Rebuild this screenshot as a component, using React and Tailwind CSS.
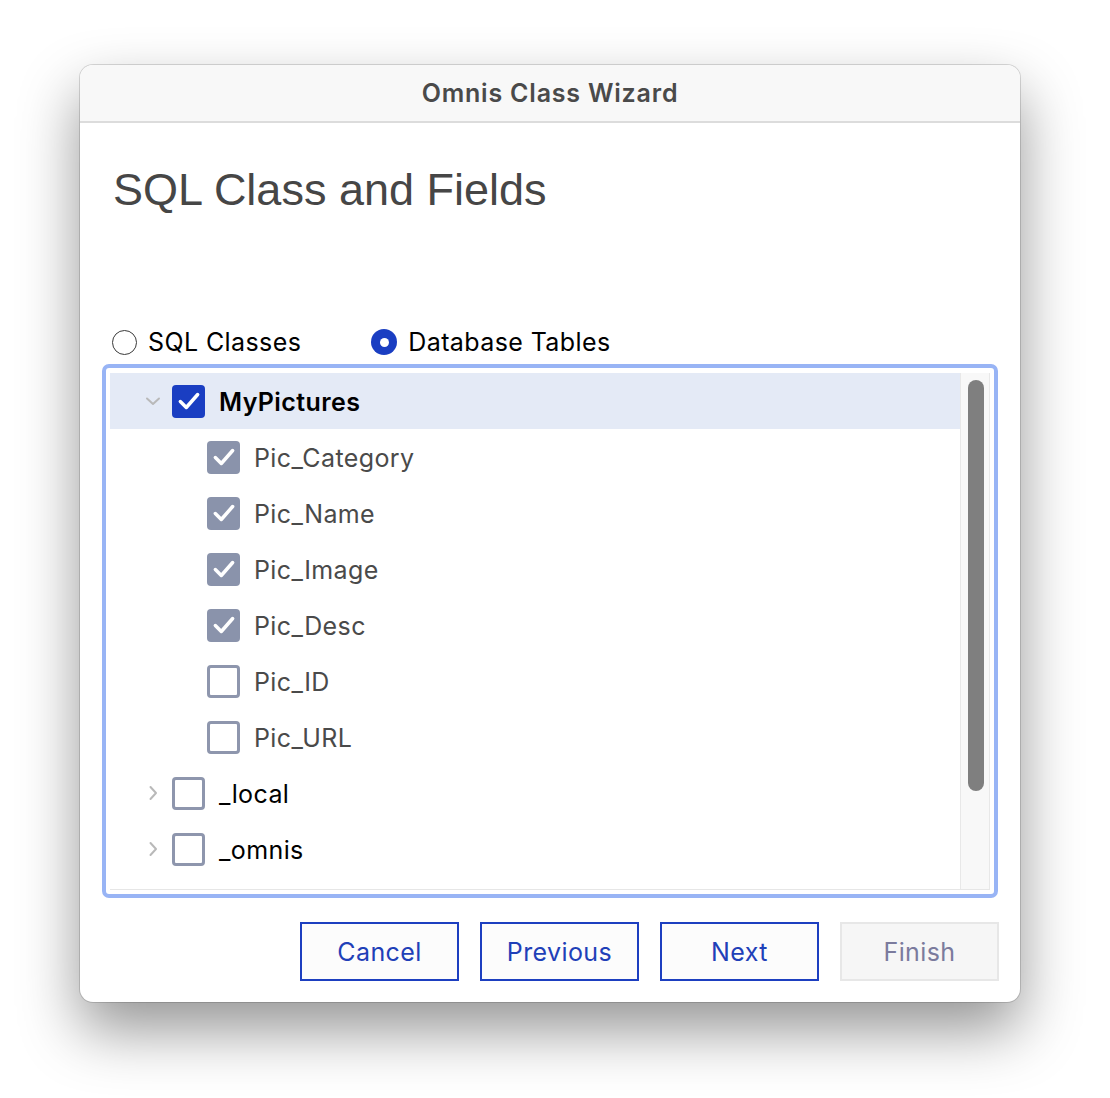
import React from "react";

const ui = { fontFamily: "Inter, 'Noto Sans', sans-serif" };
const helv = { fontFamily: "'Liberation Sans', Arial, sans-serif" };

const rows = [
  { label: "MyPictures", level: 0, open: true, checked: true, active: true },
  { label: "Pic_Category", level: 1, checked: true },
  { label: "Pic_Name", level: 1, checked: true },
  { label: "Pic_Image", level: 1, checked: true },
  { label: "Pic_Desc", level: 1, checked: true },
  { label: "Pic_ID", level: 1, checked: false },
  { label: "Pic_URL", level: 1, checked: false },
  { label: "_local", level: 0, open: false, checked: false },
  { label: "_omnis", level: 0, open: false, checked: false },
  { label: "", level: 0, open: false, checked: false },
];

const Check = ({ checked, strong }) => {
  if (checked) {
    return (
      <span
        className={`flex h-[33px] w-[33px] shrink-0 items-center justify-center rounded-[4px] ${
          strong ? "bg-[#1a3ec2]" : "bg-[#8a93ab]"
        }`}
      >
        <svg width="26" height="26" viewBox="0 0 24 24" fill="none">
          <path d="M4 12.5 L9.5 18 L20 6" stroke="white" strokeWidth="3.2" strokeLinecap="round" strokeLinejoin="round" />
        </svg>
      </span>
    );
  }
  return <span className="h-[33px] w-[33px] shrink-0 rounded-[4px] border-[3px] border-[#8e96ad] bg-white" />;
};

const Chevron = ({ open }) => (
  <svg width="18" height="18" viewBox="0 0 18 18" fill="none" className="shrink-0">
    {open ? (
      <path d="M3 6.5 L9 12 L15 6.5" stroke="#b9b9b9" strokeWidth="2" strokeLinecap="round" strokeLinejoin="round" />
    ) : (
      <path d="M6.5 3 L12 9 L6.5 15" stroke="#b9b9b9" strokeWidth="2" strokeLinecap="round" strokeLinejoin="round" />
    )}
  </svg>
);

const Radio = ({ on, label }) => (
  <div className="flex items-center gap-[11px]">
    {on ? (
      <span className="flex h-[26px] w-[26px] items-center justify-center rounded-full bg-[#1a3ec2]">
        <span className="h-[9px] w-[9px] rounded-full bg-white" />
      </span>
    ) : (
      <span className="h-[25px] w-[25px] rounded-full border-[1.5px] border-[#3a3a3a] bg-white" />
    )}
    <span className="text-[25px] leading-[32px] tracking-[0.4px] text-black">{label}</span>
  </div>
);

const Btn = ({ children, disabled }) => (
  <button
    className={`h-[59px] w-[159px] pt-[3px] text-[25px] tracking-[0.4px] ${
      disabled
        ? "border-2 border-[#e7e7e7] bg-[#f6f6f6] text-[#7b7b9d]"
        : "border-2 border-[#1d3fc0] bg-[#fcfcfc] text-[#1f40b8]"
    }`}
  >
    {children}
  </button>
);

export default function App() {
  return (
    <div className="min-h-[1098px] w-full overflow-hidden bg-white pl-[80px] pt-[65px]" style={ui}>
      <div className="flex h-[937px] w-[940px] flex-col overflow-hidden rounded-[13px] bg-white shadow-[0_28px_60px_rgba(0,0,0,0.42),0_0_0_1px_rgba(0,0,0,0.14)]">
        {/* title bar */}
        <div className="flex h-[58px] shrink-0 items-center justify-center border-b-2 border-[#dcdcdc] bg-[#f8f8f8]">
          <span className="pt-[1px] text-[25px] font-semibold tracking-[0.8px] text-[#4a4a4a]">Omnis Class Wizard</span>
        </div>

        <h1 className="ml-[33px] mt-[45px] text-[45px] leading-[44px] text-[#464646]" style={helv}>
          SQL Class and Fields
        </h1>

        <div className="ml-[32px] mt-[114px] flex items-center gap-[70px]">
          <Radio label="SQL Classes" />
          <Radio on label="Database Tables" />
        </div>

        {/* tree list */}
        <div className="mx-[22px] mt-[6px] h-[534px] rounded-[7px] border-4 border-[#98b4f5] bg-white pb-[4px] pl-[4px] pr-[4px] pt-[5px]">
          <div className="flex h-full border-b border-[#e6e6e6]">
            <div className="flex-1 overflow-hidden">
              {rows.map((r, i) => (
                <div
                  key={i}
                  className={`flex h-[56px] items-center ${r.active ? "bg-[#e4eaf6]" : ""} ${
                    r.level === 0 ? "pl-[34px]" : "pl-[97px]"
                  }`}
                >
                  {r.level === 0 && (
                    <span className="mr-[10px]">
                      <Chevron open={r.open} />
                    </span>
                  )}
                  <Check checked={r.checked} strong={r.level === 0} />
                  {r.label && (
                    <span
                      className={`ml-[14px] pt-[4px] text-[25px] tracking-[0.4px] ${
                        r.level === 0 ? "text-black" : "text-[#4a4a4a]"
                      } ${r.active ? "font-semibold" : ""}`}
                    >
                      {r.label}
                    </span>
                  )}
                </div>
              ))}
            </div>
            <div className="w-[30px] shrink-0 border-l border-r border-[#e8e8e8] bg-[#f8f8f8] pl-[7px] pt-[7px]">
              <div className="h-[411px] w-[16px] rounded-full bg-[#7f7f7f]" />
            </div>
          </div>
        </div>

        <div className="mr-[21px] mt-[24px] flex justify-end gap-[21px]">
          <Btn>Cancel</Btn>
          <Btn>Previous</Btn>
          <Btn>Next</Btn>
          <Btn disabled>Finish</Btn>
        </div>
      </div>
    </div>
  );
}
